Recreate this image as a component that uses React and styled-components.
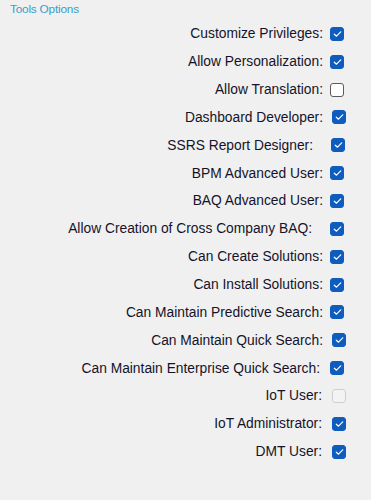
import React from 'react';
import styled, { createGlobalStyle } from 'styled-components';

const GlobalStyle = createGlobalStyle`
  html, body {
    margin: 0;
    padding: 0;
    background: #f0f0f0;
  }
  body {
    font-family: "Liberation Sans", Arial, sans-serif;
  }
`;

const Page = styled.div`
  width: 371px;
  height: 500px;
  box-sizing: border-box;
  padding-top: 2px;
  background: #f0f0f0;
`;

const Title = styled.div`
  height: 18px;
  padding-left: 10px;
  font-size: 11.8px;
  line-height: 14px;
  color: #3b9ccc;
  letter-spacing: -0.2px;
`;

const List = styled.div`
  display: flex;
  flex-direction: column;
  padding-right: 27px;
`;

const Row = styled.label`
  display: flex;
  align-items: center;
  justify-content: flex-end;
  height: 27.85px;
`;

const Label = styled.span`
  font-size: 13.8px;
  color: #15132a;
  margin-right: ${p => p.gap}px;
  white-space: nowrap;
`;

const Box = styled.span`
  display: flex;
  align-items: center;
  justify-content: center;
  box-sizing: border-box;
  width: 14px;
  height: 14px;
  border-radius: 3px;
  margin-right: ${p => p.nudge}px;
  background: ${p => (p.checked ? '#0f5cbf' : p.disabled ? '#f3f3f3' : '#ffffff')};
  border: 1px solid
    ${p => (p.checked ? '#0f5cbf' : p.disabled ? '#cfcfcf' : '#5a5a5a')};
`;

const Check = () => (
  <svg width="9" height="8" viewBox="0 0 9 8">
    <path
      d="M1.3 4.2 L3.5 6.2 L7.7 1.8"
      fill="none"
      stroke="#ffffff"
      strokeWidth="1.2"
      strokeLinecap="round"
      strokeLinejoin="round"
    />
  </svg>
);

const options = [
  { label: 'Customize Privileges:', checked: true },
  { label: 'Allow Personalization:', checked: true },
  { label: 'Allow Translation:', checked: false },
  { label: 'Dashboard Developer:', checked: true, nudge: -2, gap: 9 },
  { label: 'SSRS Report Designer:', checked: true, nudge: -1, gap: 18 },
  { label: 'BPM Advanced User:', checked: true },
  { label: 'BAQ Advanced User:', checked: true },
  { label: 'Allow Creation of Cross Company BAQ:', checked: true, gap: 18 },
  { label: 'Can Create Solutions:', checked: true },
  { label: 'Can Install Solutions:', checked: true },
  { label: 'Can Maintain Predictive Search:', checked: true },
  { label: 'Can Maintain Quick Search:', checked: true, nudge: -2, gap: 9 },
  { label: 'Can Maintain Enterprise Quick Search:', checked: true, gap: 10 },
  { label: 'IoT User:', checked: false, disabled: true, nudge: -2, gap: 10 },
  { label: 'IoT Administrator:', checked: true, nudge: -2, gap: 10 },
  { label: 'DMT User:', checked: true, nudge: -2, gap: 10 }
];

export default function App() {
  return (
    <Page>
      <GlobalStyle />
      <Title>Tools Options</Title>
      <List>
        {options.map(o => (
          <Row key={o.label}>
            <Label gap={o.gap || 7}>{o.label}</Label>
            <Box checked={o.checked} disabled={o.disabled} nudge={o.nudge || 0}>
              {o.checked && <Check />}
            </Box>
          </Row>
        ))}
      </List>
    </Page>
  );
}
